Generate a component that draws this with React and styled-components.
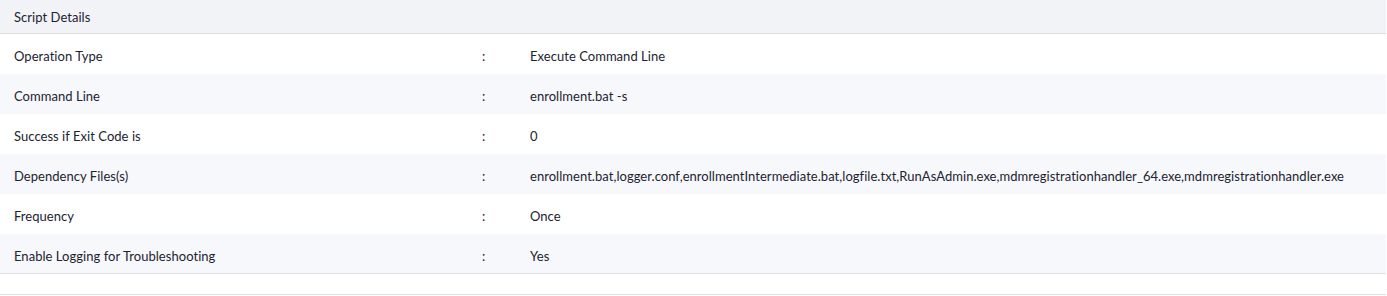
import React from "react";
import styled, { createGlobalStyle } from "styled-components";

const GlobalStyle = createGlobalStyle`
  body {
    margin: 0;
    background: #ffffff;
    font-family: Lato, "Open Sans", sans-serif;
  }
`;

const Panel = styled.div`
  width: 1386px;
  color: #222330;
  font-size: 13px;
  letter-spacing: 0.04px;
`;

const Header = styled.div`
  height: 33px;
  display: flex;
  align-items: center;
  padding-left: 14px;
  background: #f2f3f7;
  border-bottom: 1px solid #dcdce4;
`;

const Row = styled.div`
  box-sizing: border-box;
  display: grid;
  grid-template-columns: 467px 49px 1fr;
  align-items: center;
  height: 40px;
  padding: 4px 0 0 14px;
  background: ${({ alt }) => (alt ? "#f7f8fb" : "#ffffff")};
  border-bottom: ${({ last }) => (last ? "1px solid #dfdfe6" : "none")};
`;

const Colon = styled.span`
  padding-left: 1px;
`;

const Footer = styled.div`
  height: 20px;
  border-bottom: 1px solid #dfdfe6;
`;

const rows = [
  ["Operation Type", "Execute Command Line"],
  ["Command Line", "enrollment.bat -s"],
  ["Success if Exit Code is", "0"],
  [
    "Dependency Files(s)",
    "enrollment.bat,logger.conf,enrollmentIntermediate.bat,logfile.txt,RunAsAdmin.exe,mdmregistrationhandler_64.exe,mdmregistrationhandler.exe",
  ],
  ["Frequency", "Once"],
  ["Enable Logging for Troubleshooting", "Yes"],
];

export default function App() {
  return (
    <Panel>
      <GlobalStyle />
      <Header>Script Details</Header>
      {rows.map(([label, value], i) => (
        <Row key={label} alt={i % 2 === 1} last={i === rows.length - 1}>
          <span>{label}</span>
          <Colon>:</Colon>
          <span>{value}</span>
        </Row>
      ))}
      <Footer />
    </Panel>
  );
}
